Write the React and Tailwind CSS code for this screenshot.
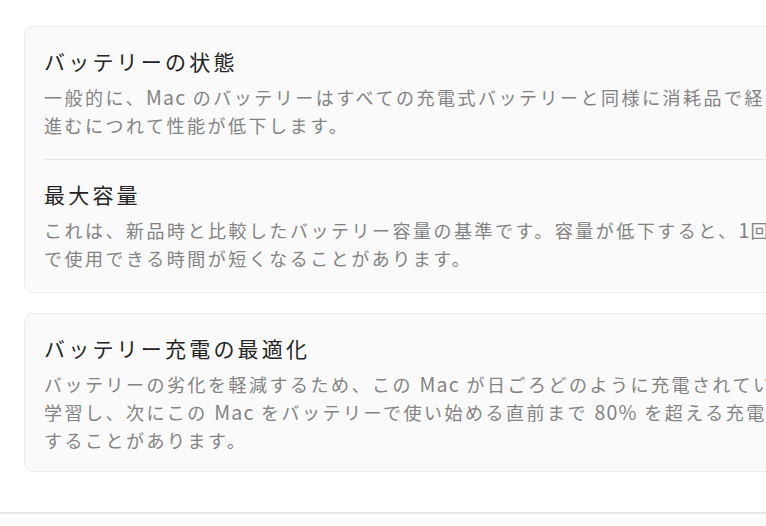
import React from 'react';

const font = { fontFamily: '"Noto Sans CJK JP", "Noto Sans", sans-serif' };

// Latin words in the JP UI are drawn a touch larger and tighter
const L = ({ children }) => <span className="text-[19.5px] tracking-[1.2px]">{children}</span>;

function Section({ title, children, last, pb = 'pb-[20px]' }) {
  return (
    <div className={`pt-[20px] ${pb} ${last ? '' : 'border-b border-[#e8e8e8]'}`}>
      <h3 className="text-[21px] leading-[28px] tracking-[3.2px] text-[#242424] whitespace-nowrap">{title}</h3>
      <p className="mt-[8px] text-[18px] leading-[28px] tracking-[2.5px] text-[#838383] whitespace-nowrap">{children}</p>
    </div>
  );
}

export default function App() {
  return (
    <div className="w-[766px] h-[526px] overflow-hidden bg-white flex flex-col" style={font}>
      <div className="pt-[26px] pl-[24px] flex flex-col gap-[20px]">
        <div className="w-[900px] rounded-[9px] border border-[#ececec] bg-[#fafafa] pl-[19px]">
          <Section title="バッテリーの状態">
            一般的に、<L>Mac</L> のバッテリーはすべての充電式バッテリーと同様に消耗品で経年劣化が
            <br />
            進むにつれて性能が低下します。
          </Section>
          <Section last title="最大容量">
            これは、新品時と比較したバッテリー容量の基準です。容量が低下すると、<L>1</L>回の充電
            <br />
            で使用できる時間が短くなることがあります。
          </Section>
        </div>
        <div className="w-[900px] rounded-[9px] border border-[#ececec] bg-[#fafafa] pl-[19px]">
          <Section last pb="pb-[17px]" title="バッテリー充電の最適化">
            バッテリーの劣化を軽減するため、この <L>Mac</L> が日ごろどのように充電されているかを
            <br />
            学習し、次にこの <L>Mac</L> をバッテリーで使い始める直前まで <L>80%</L> を超える充電を延期
            <br />
            することがあります。
          </Section>
        </div>
      </div>
      <div className="mt-[40px] border-t-2 border-[#e6e6e6] bg-[#fcfcfc] flex-1" />
    </div>
  );
}
